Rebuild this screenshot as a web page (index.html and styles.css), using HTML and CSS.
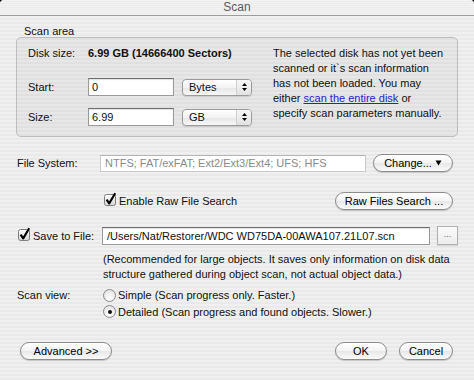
FILE: index.html
```html
<!DOCTYPE html>
<html>
<head>
<meta charset="utf-8">
<title>Scan</title>
<link rel="stylesheet" href="styles.css">
</head>
<body>
<div class="window">
  <div class="titlebar">Scan</div>
  <div class="dialog">
    <div class="group-label">Scan area</div>
    <div class="group">
      <div class="group-left">
        <div class="disk-row"><span class="lbl">Disk size:</span><span class="disk-value">6.99 GB (14666400 Sectors)</span></div>
        <div class="field-row first">
          <span class="lbl">Start:</span>
          <div class="textfield small">0</div>
          <div class="popup"><span class="popup-text">Bytes</span><span class="popup-arrows"><svg width="7" height="10" viewBox="0 0 7 10"><path d="M3.5 1 L6 4 H1 Z M3.5 9 L6 6 H1 Z" fill="#000"/></svg></span></div>
        </div>
        <div class="field-row">
          <span class="lbl">Size:</span>
          <div class="textfield small">6.99</div>
          <div class="popup"><span class="popup-text">GB</span><span class="popup-arrows"><svg width="7" height="10" viewBox="0 0 7 10"><path d="M3.5 1 L6 4 H1 Z M3.5 9 L6 6 H1 Z" fill="#000"/></svg></span></div>
        </div>
      </div>
      <div class="group-info">The selected disk has not yet been<br>scanned or it`s scan information<br>has not been loaded. You may<br>either <a href="#" class="link">scan the entire disk</a> or<br>specify scan parameters manually.</div>
    </div>

    <div class="fs-row">
      <span class="fs-label">File System:</span>
      <div class="textfield disabled fs-field">NTFS; FAT/exFAT; Ext2/Ext3/Ext4; UFS; HFS</div>
      <button class="pill change-btn">Change... <svg width="7" height="6" viewBox="0 0 7 6"><path d="M0.5 0.5 H6.5 L3.5 5.5 Z" fill="#000"/></svg></button>
    </div>

    <div class="raw-row">
      <span class="check"><svg width="15" height="15" viewBox="0 0 15 15"><rect x="1.5" y="2.5" width="11" height="11" rx="2" fill="url(#cb)" stroke="#7d7d7d"/><defs><linearGradient id="cb" x1="0" y1="0" x2="0" y2="1"><stop offset="0" stop-color="#fdfdfd"/><stop offset="1" stop-color="#d6d6d6"/></linearGradient></defs><path d="M3.6 7.6 L6.2 11.4 L12.2 1.2" fill="none" stroke="#000" stroke-width="2.1" stroke-linejoin="round"/></svg></span>
      <span class="check-text">Enable Raw File Search</span>
      <button class="pill raw-btn">Raw Files Search ...</button>
    </div>

    <div class="save-row">
      <span class="check save-check"><svg width="15" height="15" viewBox="0 0 15 15"><rect x="1.5" y="2.5" width="11" height="11" rx="2" fill="url(#cb2)" stroke="#7d7d7d"/><defs><linearGradient id="cb2" x1="0" y1="0" x2="0" y2="1"><stop offset="0" stop-color="#fdfdfd"/><stop offset="1" stop-color="#d6d6d6"/></linearGradient></defs><path d="M3.6 7.6 L6.2 11.4 L12.2 1.2" fill="none" stroke="#000" stroke-width="2.1" stroke-linejoin="round"/></svg></span>
      <span class="save-label">Save to File:</span>
      <div class="textfield path-field">/Users/Nat/Restorer/WDC WD75DA-00AWA107.21L07.scn</div>
      <button class="square-btn">...</button>
    </div>

    <div class="note">(Recommended for large objects. It saves only information on disk data<br>structure gathered during object scan, not actual object data.)</div>

    <div class="scanview">
      <span class="sv-label">Scan view:</span>
      <div class="radios">
        <div class="radio-line"><span class="radio"></span><span>Simple (Scan progress only. Faster.)</span></div>
        <div class="radio-line"><span class="radio on"></span><span>Detailed (Scan progress and found objects. Slower.)</span></div>
      </div>
    </div>

    <div class="buttons">
      <button class="pill adv-btn">Advanced &gt;&gt;</button>
      <button class="pill ok-btn">OK</button>
      <button class="pill cancel-btn">Cancel</button>
    </div>
  </div>
</div>
</body>
</html>
```

FILE: styles.css
```css
html {
  background: #000;
}
body {
  margin: 0;
  width: 474px;
  height: 380px;
  overflow: hidden;
  font-family: "Liberation Sans", Arial, sans-serif;
  font-size: 11px;
  color: #111;
}
.window {
  width: 474px;
  height: 380px;
  border-radius: 4px 4px 0 0;
  overflow: hidden;
  background: repeating-linear-gradient(to bottom, #f0f0f0 0, #f0f0f0 2px, #e9e9e9 2px, #e9e9e9 4px);
}
.titlebar {
  height: 15px;
  border-bottom: 1px solid #9c9c9c;
  text-align: center;
  font-size: 12px;
  line-height: 15px;
  color: #5c5c5c;
  background: repeating-linear-gradient(to bottom, #f3f3f3 0, #f3f3f3 1px, #ebebeb 1px, #ebebeb 2px);
}
.dialog {
  padding: 0 16px;
}
.group-label {
  margin-top: 9px;
  height: 12px;
  line-height: 12px;
  padding-left: 8px;
}
.group {
  box-sizing: border-box;
  height: 100px;
  border: 1px solid #bdbdbd;
  border-radius: 5px;
  background: rgba(0, 0, 0, 0.035);
  padding: 8px 8px 10px 11px;
  display: flex;
  gap: 21px;
}
.group-left {
  width: 224px;
  display: flex;
  flex-direction: column;
}
.disk-row {
  height: 15px;
  line-height: 15px;
  display: flex;
}
.lbl {
  width: 60px;
  flex: none;
}
.disk-value {
  font-weight: bold;
}
.field-row {
  height: 18px;
  display: flex;
  align-items: center;
  margin-top: 12px;
}
.field-row.first {
  margin-top: 17px;
}
.textfield {
  box-sizing: border-box;
  height: 18px;
  line-height: 16px;
  background: #fff;
  border: 1px solid #9a9a9a;
  border-top-color: #6f6f6f;
  box-shadow: inset 0 1px 1px rgba(0, 0, 0, 0.12);
  padding-left: 3px;
  white-space: nowrap;
  overflow: hidden;
}
.textfield.small {
  width: 86px;
}
.popup {
  box-sizing: border-box;
  width: 70px;
  height: 17px;
  margin-left: 8px;
  border: 1px solid #9b9b9b;
  border-radius: 4px;
  background: linear-gradient(#ffffff, #f3f3f3 50%, #e6e6e6 51%, #f7f7f7);
  box-shadow: 0 1px 1px rgba(0, 0, 0, 0.12);
  display: flex;
  align-items: center;
  overflow: hidden;
}
.popup-text {
  flex: 1;
  padding-left: 6px;
  line-height: 15px;
}
.popup-arrows {
  width: 14px;
  height: 15px;
  display: flex;
  align-items: center;
  justify-content: center;
  border-left: 1px solid #d0d0d0;
  background: linear-gradient(#f6f6f6, #e2e2e2);
}
.group-info {
  line-height: 15px;
  white-space: nowrap;
}
.link {
  color: #2323d0;
  text-decoration: underline;
}

.fs-row {
  margin-top: 17px;
  margin-left: 1px;
  margin-right: 5px;
  height: 18px;
  display: flex;
  align-items: center;
}
.fs-label {
  width: 83px;
  flex: none;
}
.fs-field {
  width: 266px;
  height: 17px;
  line-height: 15px;
}
.textfield.disabled {
  color: #8a8a8a;
  border-color: #c9c9c9;
  border-top-color: #b5b5b5;
  box-shadow: none;
  padding-left: 4px;
}
.pill {
  box-sizing: border-box;
  height: 18px;
  padding: 0;
  font-family: inherit;
  font-size: 11px;
  color: #000;
  border: 1px solid #8c8c8c;
  border-radius: 9px;
  background: linear-gradient(#ffffff, #f4f4f4 50%, #e7e7e7 51%, #fbfbfb);
  box-shadow: 0 1px 1px rgba(0, 0, 0, 0.18);
  display: flex;
  align-items: center;
  justify-content: center;
  gap: 3px;
}
.change-btn {
  width: 80px;
  margin-left: auto;
}
.raw-row {
  margin-top: 20px;
  margin-right: 5px;
  padding-left: 87px;
  height: 18px;
  display: flex;
  align-items: center;
}
.check {
  width: 15px;
  height: 15px;
  flex: none;
  display: flex;
  margin-top: -3px;
}
.check-text {
  margin-left: 1px;
}
.raw-btn {
  width: 118px;
  margin-left: auto;
}
.save-row {
  margin-top: 16px;
  height: 19px;
  display: flex;
  align-items: center;
}
.save-check {
  margin-left: 1px;
}
.save-label {
  margin-left: 1px;
  width: 69px;
}
.path-field {
  width: 328px;
  height: 18px;
  padding-left: 4px;
}
.square-btn {
  box-sizing: border-box;
  width: 21px;
  height: 19px;
  margin-left: 7px;
  padding: 0 0 4px;
  font-family: inherit;
  font-size: 9px;
  color: #666;
  border: 1px solid #b0b0b0;
  background: linear-gradient(#fbfbfb, #ececec);
  box-shadow: 0 1px 1px rgba(0, 0, 0, 0.1);
}
.note {
  margin-top: 7px;
  padding-left: 87px;
  line-height: 15px;
  white-space: nowrap;
}
.scanview {
  margin-top: 5px;
  margin-left: 1px;
  display: flex;
}
.sv-label {
  width: 86px;
  line-height: 16px;
  flex: none;
}
.radios {
  display: flex;
  flex-direction: column;
}
.radio-line {
  height: 16px;
  display: flex;
  align-items: center;
  gap: 2px;
}
.radio-line + .radio-line {
  height: 17px;
}
.radio {
  box-sizing: border-box;
  width: 13px;
  height: 13px;
  border: 1px solid #8a8a8a;
  border-radius: 50%;
  background: radial-gradient(circle at 50% 70%, #ffffff, #dcdcdc);
  display: flex;
  align-items: center;
  justify-content: center;
}
.radio.on::after {
  content: "";
  width: 4px;
  height: 4px;
  border-radius: 50%;
  background: #111;
}
.buttons {
  margin-top: 22px;
  margin-left: 4px;
  margin-right: 5px;
  height: 18px;
  display: flex;
  align-items: center;
}
.adv-btn {
  width: 92px;
}
.ok-btn {
  width: 52px;
  margin-left: auto;
}
.cancel-btn {
  width: 54px;
  margin-left: 12px;
}
```
